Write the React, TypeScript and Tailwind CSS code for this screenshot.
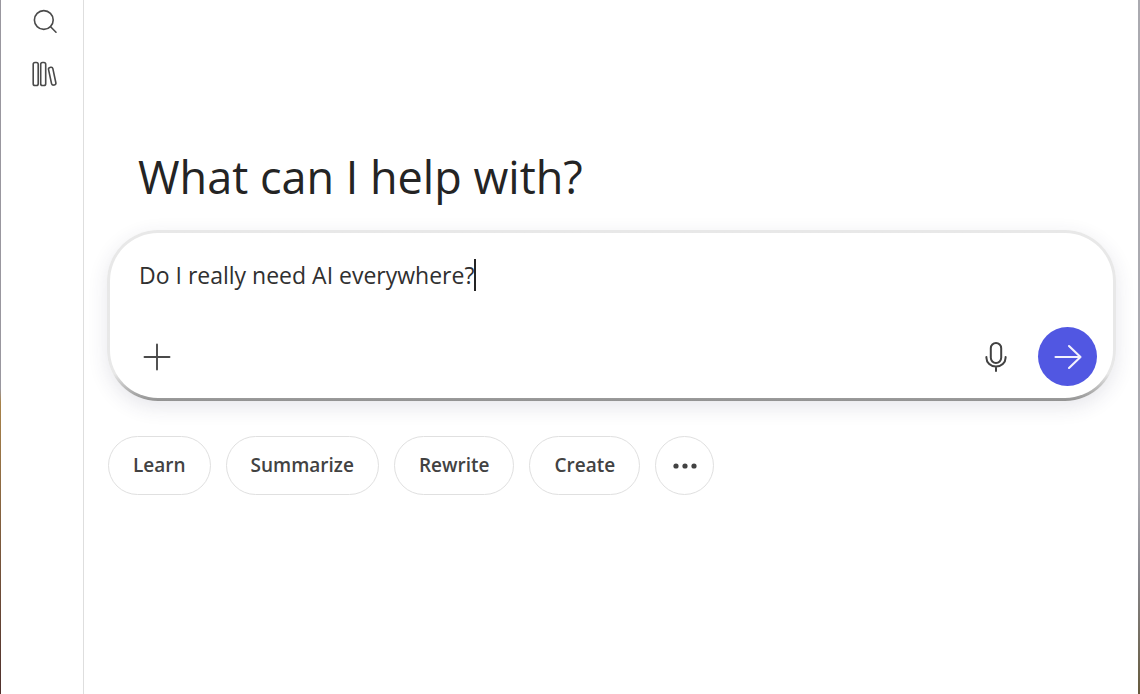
import { useState } from "react";

const suggestions = ["Learn", "Summarize", "Rewrite", "Create"];

const SearchIcon = () => (
  <svg width="26" height="26" viewBox="0 0 26 26" fill="none" stroke="#4a4a4a" strokeWidth="1.6" strokeLinecap="round">
    <circle cx="11.8" cy="12" r="9.4" />
    <path d="M18.6 18.8 24 24.2" />
  </svg>
);

const LibraryIcon = () => (
  <svg width="26" height="26" viewBox="0 0 26 26" fill="none" stroke="#4a4a4a" strokeWidth="1.6">
    <rect x="1.2" y="1.5" width="5" height="23" rx="1.8" />
    <rect x="8.7" y="1.5" width="5" height="23" rx="1.8" />
    <rect x="18" y="6.2" width="4.4" height="18" rx="1.8" transform="rotate(-12 20.2 15.2)" />
  </svg>
);

const PlusIcon = () => (
  <svg width="28" height="28" viewBox="0 0 28 28" fill="none" stroke="#4a4a4a" strokeWidth="1.9" strokeLinecap="round">
    <path d="M14 1.5v25M1.5 14h25" />
  </svg>
);

const MicIcon = () => (
  <svg width="24" height="32" viewBox="0 0 24 32" fill="none" stroke="#424242" strokeWidth="2" strokeLinecap="round">
    <rect x="6.8" y="2" width="10.4" height="20" rx="5.2" />
    <path d="M2.4 16v.8a9.6 8.8 0 0 0 19.2 0V16M12 25.6V30" />
  </svg>
);

const ArrowIcon = () => (
  <svg width="28" height="28" viewBox="0 0 28 28" fill="none" stroke="#f3f2fd" strokeWidth="2.1" strokeLinecap="round" strokeLinejoin="round">
    <path d="M1.5 14h25M15 3l11.5 11L15 25" />
  </svg>
);

const DotsIcon = () => (
  <svg width="24" height="24" viewBox="0 0 24 24" fill="#424242">
    <circle cx="3" cy="12" r="2.6" />
    <circle cx="12" cy="12" r="2.6" />
    <circle cx="21" cy="12" r="2.6" />
  </svg>
);

export default function App() {
  const [prompt, setPrompt] = useState("Do I really need AI everywhere?");

  return (
    <div className="flex min-h-screen bg-white font-['Open_Sans','Noto_Sans',sans-serif]">
      <div className="w-px shrink-0 bg-linear-to-b from-[#99979f] from-56% via-[#a8834a] via-58% to-[#4f302c]" />
      <nav className="flex w-[83px] shrink-0 flex-col items-center gap-[27px] border-r border-[#dedede] pt-2 pl-[6px]">
        <button type="button" aria-label="Search">
          <SearchIcon />
        </button>
        <button type="button" aria-label="Library">
          <LibraryIcon />
        </button>
      </nav>

      <main className="min-w-0 flex-1 px-[23px] pt-[145px]">
        <h1 className="pl-[31px] text-[45px] leading-[64px] text-[#242424]">What can I help with?</h1>

        <form
          className="-mr-px mt-[21px] rounded-[51px] bg-linear-to-b from-[#e8e8e8] from-84% to-[#929292] p-[3px] shadow-[0_6px_20px_rgba(50,50,93,0.12)]"
          onSubmit={(e) => e.preventDefault()}
        >
          <div className="rounded-[48px] bg-white pt-[26px] pr-4 pb-3 pl-[29px]">
            <div className="grid text-[23px] leading-8 text-[#303030]">
              {/* mirrors the typed text so the caret follows it */}
              <div aria-hidden="true" className="col-start-1 row-start-1 flex overflow-hidden">
                <span className="border-r-2 border-[#242424] whitespace-pre text-transparent select-none">{prompt}</span>
              </div>
              <input
                type="text"
                aria-label="Message"
                value={prompt}
                onChange={(e) => setPrompt(e.target.value)}
                className="col-start-1 row-start-1 w-full bg-transparent caret-transparent outline-none"
              />
            </div>
            <div className="mt-9 flex items-center">
              <button type="button" aria-label="Add" className="ml-1">
                <PlusIcon />
              </button>
              <button type="button" aria-label="Use microphone" className="mr-[30px] ml-auto">
                <MicIcon />
              </button>
              <button
                type="submit"
                aria-label="Send"
                className="flex size-[59px] items-center justify-center rounded-full bg-[#5157e2]"
              >
                <ArrowIcon />
              </button>
            </div>
          </div>
        </form>

        <div className="mt-[35px] flex flex-wrap gap-[15px] pl-px">
          {suggestions.map((label) => (
            <button
              key={label}
              type="button"
              className="h-[59px] rounded-full border border-[#e0e0e0] px-6 text-[19px] font-semibold text-[#424242]"
            >
              {label}
            </button>
          ))}
          <button
            type="button"
            aria-label="More"
            className="flex size-[59px] items-center justify-center rounded-full border border-[#e0e0e0]"
          >
            <DotsIcon />
          </button>
        </div>
      </main>

      <div className="w-0.5 shrink-0 bg-linear-to-b from-[#aaaab0] from-70% via-[#85858b] via-83% to-[#665a3c]" />
    </div>
  );
}
